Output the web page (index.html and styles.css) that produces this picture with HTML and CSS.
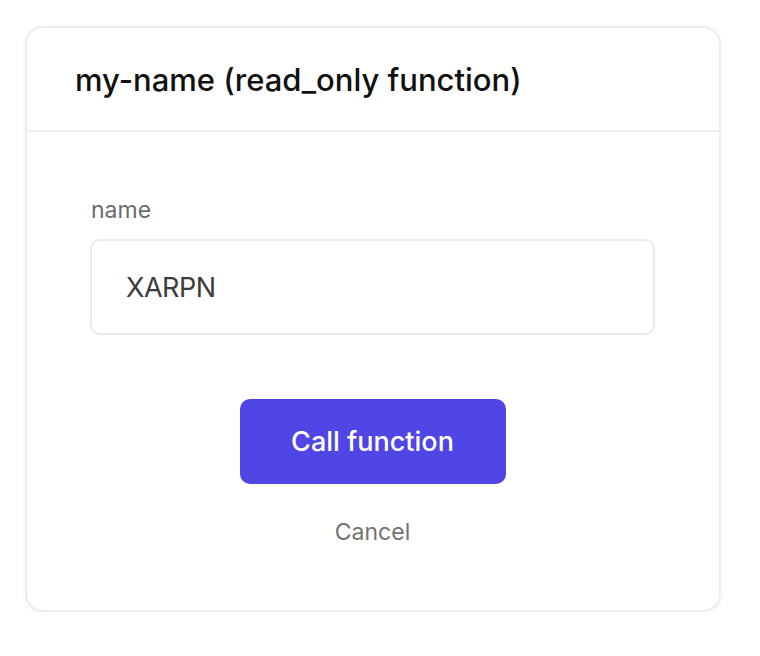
FILE: index.html
```html
<!DOCTYPE html>
<html>
<head>
<meta charset="utf-8">
<link rel="stylesheet" href="styles.css">
</head>
<body>
<div class="card">
  <div class="card-header">
    <h1 class="title">my-name (read_only function)</h1>
  </div>
  <div class="card-body">
    <label class="field-label" for="name">name</label>
    <div class="input">XARPN</div>
    <div class="actions">
      <button class="btn-primary">Call function</button>
      <button class="btn-link">Cancel</button>
    </div>
  </div>
</div>
</body>
</html>
```

FILE: styles.css
```css
* { box-sizing: border-box; }
html, body { margin: 0; padding: 0; background: #ffffff; }
body {
  font-family: Inter, "Noto Sans", sans-serif;
  padding: 26px 0 0 25px;
}
.card {
  width: 696px;
  height: 586px;
  border: 2px solid #ededed;
  border-radius: 18px;
  background: #fff;
  box-shadow: 0 2px 6px rgba(0,0,0,0.04);
  display: flex;
  flex-direction: column;
}
.card-header {
  height: 104px;
  border-bottom: 2px solid #ededed;
  display: flex;
  align-items: center;
  padding-left: 48px;
}
.title {
  margin: 0;
  font-size: 31px;
  font-weight: 500;
  color: #111;
  letter-spacing: 0;
}
.card-body {
  padding: 64px 64px 0 63px;
  display: flex;
  flex-direction: column;
}
.field-label {
  font-size: 23px;
  color: #6b6b6b;
  line-height: 28px;
  padding-left: 1px;
}
.input {
  margin-top: 15px;
  height: 96px;
  border: 2px solid #ebebeb;
  border-radius: 10px;
  display: flex;
  align-items: center;
  padding-left: 34px;
  font-size: 27px;
  color: #3c3c3c;
  letter-spacing: -0.5px;
}
.actions {
  display: flex;
  flex-direction: column;
  align-items: center;
  margin-top: 64px;
}
.btn-primary {
  width: 266px;
  height: 85px;
  border: none;
  border-radius: 10px;
  background: #5046e5;
  color: #fff;
  font-family: inherit;
  font-size: 27px;
  font-weight: 500;
}
.btn-link {
  margin-top: 34px;
  border: none;
  background: none;
  font-family: inherit;
  font-size: 23px;
  color: #727272;
  padding: 0;
}
```
